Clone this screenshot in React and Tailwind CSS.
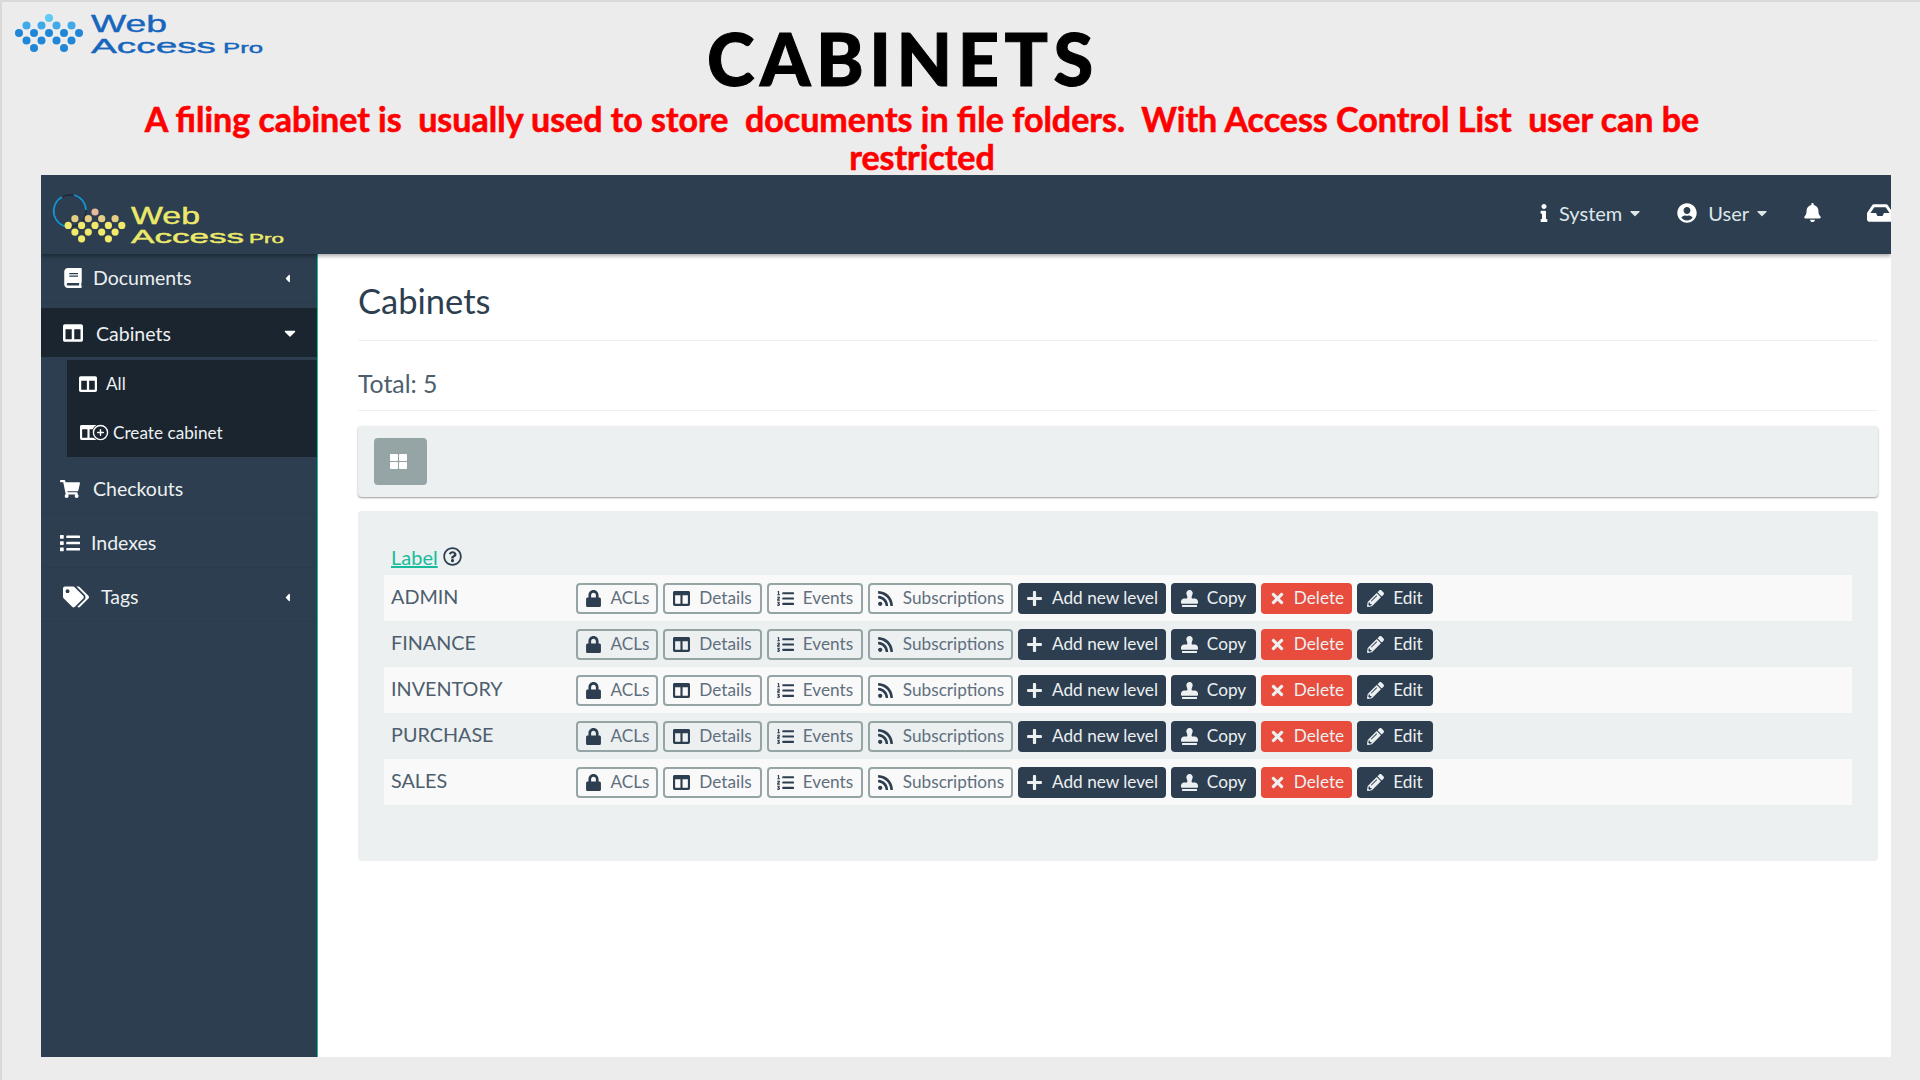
import React from 'react';
import {
  FaBook, FaColumns, FaShoppingCart, FaList, FaTags, FaCaretLeft, FaCaretDown,
  FaInfo, FaUserCircle, FaBell, FaInbox, FaThLarge, FaRegQuestionCircle, FaLock, FaListOl,
  FaRss, FaPlus, FaStamp, FaTimes, FaPencilAlt,
} from 'react-icons/fa';
import { FiPlusCircle } from 'react-icons/fi';

const rows = ['ADMIN', 'FINANCE', 'INVENTORY', 'PURCHASE', 'SALES'];

const LogoDots = ({ color, top, left = 0, x = 0, y = 0, step = 15, radius = 3.8 }) => {
  const dots = [
    [0, 0, top],
    [-1.5, 1, left], [-0.5, 1, left], [0.5, 1, left], [1.5, 1, left],
    [-2, 2, color], [-1, 2, color], [0, 2, color], [1, 2, color], [2, 2, color],
    [-1.5, 3, color], [-0.5, 3, color], [0.5, 3, color], [1.5, 3, color],
    [-1, 4, color], [1, 4, color],
  ];
  return dots.map(([dx, dy, fill], i) => (
    <circle key={i} cx={x + dx * step} cy={y + dy * step * 0.5} r={radius} fill={fill} />
  ));
};

const LogoText = ({ color, web, access, pro }) => (
  <g fill={color} stroke={color} strokeWidth="0.4" fontFamily="'Liberation Sans', sans-serif">
    <text x={web.x} y={web.y} fontSize={web.size} textLength={web.w} lengthAdjust="spacingAndGlyphs">Web</text>
    <text x={access.x} y={access.y} fontSize={access.size} textLength={access.w} lengthAdjust="spacingAndGlyphs">Access</text>
    <text x={pro.x} y={pro.y} fontSize={pro.size} textLength={pro.w} lengthAdjust="spacingAndGlyphs">Pro</text>
  </g>
);

const TopLogo = () => (
  <svg width="250" height="50" viewBox="0 -6 250 50" className="shrink-0">
    <LogoDots x={34} y={4} step={15} radius={4} color="#1f86d8" top="#5fcaf5" left="#3fa9ea" />
    <LogoText
      color="#1766bd"
      web={{ x: 76, y: 18, size: 24, w: 76 }}
      access={{ x: 76, y: 39, size: 21, w: 125 }}
      pro={{ x: 208, y: 39, size: 15, w: 40 }}
    />
  </svg>
);

const NavLogo = () => (
  <svg width="250" height="70" viewBox="0 0 250 70">
    <circle cx="29" cy="26" r="16" fill="none" stroke="#1d2b38" strokeWidth="1.5" />
    <path d="M21 12 A16 16 0 0 0 28 42" fill="none" stroke="#1494d2" strokeWidth="1.8" />
    <path d="M33 10 A16 16 0 0 1 45 25" fill="none" stroke="#1494d2" strokeWidth="1.8" />
    <LogoDots x={54} y={27} step={13.4} radius={3.6} color="#f3e96b" top="#e9b99b" left="#e5cd85" />
    <LogoText
      color="#ece96a"
      web={{ x: 90, y: 39, size: 24, w: 69 }}
      access={{ x: 90, y: 58, size: 18, w: 113 }}
      pro={{ x: 208, y: 58, size: 13, w: 35 }}
    />
  </svg>
);

const SideItem = ({ icon, label, caret, active, iconClass = 'text-[20px]', gap = 'gap-3', pad = 'pl-[22px]', right = 'pr-[23px]' }) => (
  <div
    className={`h-[49px] flex items-center ${right} ${pad} ${gap} text-[19.5px] text-white ${active ? 'bg-[#1a252f]' : 'border-b border-[#2a3b4c]'}`}
  >
    <span className={iconClass}>{icon}</span>
    <span className={`flex-1 text-[#ecf0f1] ${active ? 'pt-[2px]' : ''}`}>{label}</span>
    {caret}
  </div>
);

const Outline = ({ icon, label, w }) => (
  <button className={`${w} h-[31px] flex items-center justify-center gap-[9px] border-2 border-[#95a5a6] rounded-[4px] text-[17.2px] text-[#5f6f7d]`}>
    <span className="text-[#2c3e50] text-[17px]">{icon}</span>
    {label}
  </button>
);

const Solid = ({ icon, label, w, color = 'bg-[#2c3e50]', iconClass = 'text-[17px]', gap = 'gap-[9px]' }) => (
  <button className={`${w} ${color} ${gap} h-[31px] flex items-center justify-center rounded-[4px] text-[17.2px] text-[#ecf0f1]`}>
    <span className={iconClass}>{icon}</span>
    {label}
  </button>
);

const Row = ({ name, odd }) => (
  <div className={`h-[46px] flex items-center pl-[7px] ${odd ? 'bg-[#f9f9f9]' : ''}`}>
    <div className="w-[185px] -mt-[3px] text-[19.8px] text-[#4d5e6e]">{name}</div>
    <div className="flex gap-[5px]">
      <Outline icon={<FaLock />} label="ACLs" w="w-[82px]" />
      <Outline icon={<FaColumns />} label="Details" w="w-[99px]" />
      <Outline icon={<FaListOl />} label="Events" w="w-[96px]" />
      <Outline icon={<FaRss />} label="Subscriptions" w="w-[145px]" />
      <Solid icon={<FaPlus />} label="Add new level" w="w-[148px]" />
      <Solid icon={<FaStamp />} label="Copy" w="w-[85px]" />
      <Solid icon={<FaTimes />} label="Delete" w="w-[91px]" color="bg-[#e74c3c]" gap="gap-2" />
      <Solid icon={<FaPencilAlt />} label="Edit" w="w-[76px]" />
    </div>
  </div>
);

export default function App() {
  return (
    <div className="w-[1920px] h-[1080px] overflow-hidden bg-[#ececec] border-l-2 border-t-2 border-[#d9d9d9] font-['Lato',sans-serif]">
      {/* Slide heading */}
      <div className="h-[173px]">
        <div className="flex items-start pl-[13px] pt-[6px] h-[98px]">
          <TopLogo />
          <h1 className="ml-[442px] mt-[7px] text-[72px] leading-[86px] font-black text-black tracking-[5.5px] [-webkit-text-stroke:1px_black]">CABINETS</h1>
        </div>
        <p className="ml-[118px] w-[1604px] text-center text-[34px] leading-[38px] font-bold text-[#ff0000] [-webkit-text-stroke:0.6px_#ff0000]">
          A filing cabinet is&nbsp; usually used to store&nbsp; documents in file folders.&nbsp; With Access Control List&nbsp; user can be
          <br />
          restricted
        </p>
      </div>

      {/* App window */}
      <div className="ml-[39px] w-[1850px] h-[882px] flex flex-col overflow-hidden bg-white">
        <header className="h-[79px] shrink-0 flex items-center justify-between bg-[#2c3e50] shadow-[0_2px_4px_rgba(0,0,0,0.35)] z-10">
          <div className="self-end -mb-[1px]">
            <NavLogo />
          </div>
          <div className="flex items-center -mt-[4px] text-[20px] text-[#dfe6e9] -mr-[2px]">
            <FaInfo className="text-[18px] text-white" />
            <span className="ml-[6px]">System</span>
            <FaCaretDown className="ml-[5px] text-[16px]" />
            <FaUserCircle className="ml-[34px] text-[20px] text-white" />
            <span className="ml-[11px]">User</span>
            <FaCaretDown className="ml-[5px] text-[16px]" />
            <FaBell className="ml-[33px] text-[19px] text-white" />
            <FaInbox className="ml-[45px] text-[26px] text-white" />
          </div>
        </header>

        <div className="flex-1 flex">
          {/* Sidebar */}
          <aside className="w-[277px] shrink-0 bg-[#2c3e50] border-r border-[#1abc9c]">
            <SideItem icon={<FaBook />} label="Documents" gap="gap-[10px]" caret={<FaCaretLeft className="text-[13px]" />} />
            <div className="h-[5px]" />
            <SideItem
              active
              icon={<FaColumns />}
              label="Cabinets"
              gap="gap-[13px]"
              right="pr-[18px]"
              caret={<FaCaretDown className="text-[18px]" />}
            />
            <div className="h-[3px]" />
            <div className="ml-[26px] h-[97px] flex flex-col justify-around bg-[#1a252f] text-[17.2px] text-[#ecf0f1]">
              <div className="flex items-center pl-[12px] gap-[9px]">
                <FaColumns className="text-[18px] text-white" />
                All
              </div>
              <div className="flex items-center pl-[13px]">
                <span className="flex items-center w-[33px] text-white">
                  <FaColumns className="text-[17px]" />
                  <FiPlusCircle className="-ml-[5px] text-[17px] bg-[#1a252f] rounded-full" />
                </span>
                Create cabinet
              </div>
            </div>
            <div className="h-[8px]" />
            <SideItem icon={<FaShoppingCart />} label="Checkouts" gap="gap-[13px]" pad="pl-[19px]" />
            <div className="h-[5px]" />
            <SideItem icon={<FaList />} label="Indexes" gap="gap-[11px]" pad="pl-[19px]" />
            <div className="h-[5px]" />
            <SideItem
              icon={<FaTags />}
              label="Tags"
              iconClass="text-[26px]"
              caret={<FaCaretLeft className="text-[13px]" />}
            />
          </aside>

          {/* Main content */}
          <main className="flex-1 pl-[40px] pr-[13px]">
            <h2 className="mt-[26px] text-[34.5px] leading-[42px] text-[#2c3e50] pb-[18px] border-b border-[#ecf0f1]">Cabinets</h2>
            <div className="mt-[28px] text-[24.8px] leading-[30px] text-[#4d5e6e] pb-[11px] border-b border-[#ecf0f1]">Total: 5</div>
            <div className="mt-[15px] h-[71px] flex items-center pl-[16px] bg-[#ecf0f1] rounded-[4px] shadow-[0_1px_2px_rgba(0,0,0,0.4)]">
              <button className="w-[53px] h-[47px] pr-[4px] flex items-center justify-center bg-[#95a5a6] rounded-[4px] text-white text-[17px]">
                <FaThLarge />
              </button>
            </div>
            <div className="mt-[14px] h-[350px] bg-[#ecf0f1] rounded-[4px] pl-[26px] pr-[26px] pt-[33px]">
              <div className="h-[31px] pl-[7px] flex items-start gap-[5px] text-[20px] leading-[26px]">
                <span className="text-[#18bc9c] underline">Label</span>
                <FaRegQuestionCircle className="mt-[3px] text-[19px] text-[#2c3e50]" />
              </div>
              {rows.map((name, i) => (
                <Row key={name} name={name} odd={i % 2 === 0} />
              ))}
            </div>
          </main>
        </div>
      </div>
    </div>
  );
}
